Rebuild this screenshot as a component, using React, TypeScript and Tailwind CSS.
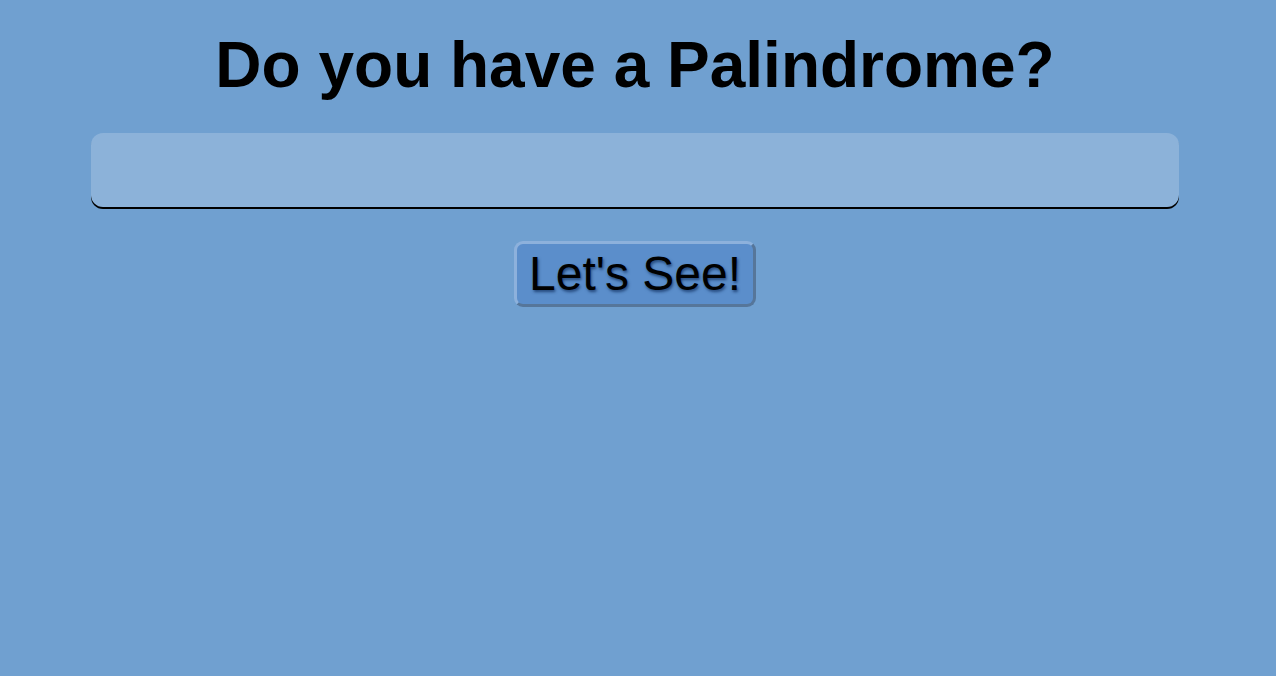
import React from "react";

export default function App() {
  return (
    <div className="min-h-[676px] w-full bg-[#70a0d0] font-['Liberation_Sans',Arial,sans-serif]">
      <div className="flex w-[1270px] flex-col items-center pt-[28px]">
        <h1 className="text-[64px] font-bold leading-[normal] text-black">Do you have a Palindrome?</h1>
        <input
          type="text"
          className="mt-[31px] h-[74px] w-[1088px] rounded-[12px] bg-[#8cb2d9] px-4 text-[32px] shadow-[0_2px_0_#000] outline-none"
        />
        <button className="mt-[34px] h-[66px] w-[242px] rounded-[9px] border-[3px] border-solid border-t-[#8db1dc] border-l-[#8db1dc] border-r-[#56769a] border-b-[#56769a] bg-[#5b8ecb] text-[48px] leading-none text-black [text-shadow:1px_2px_3px_#23477a]">
          Let's See!
        </button>
      </div>
    </div>
  );
}
